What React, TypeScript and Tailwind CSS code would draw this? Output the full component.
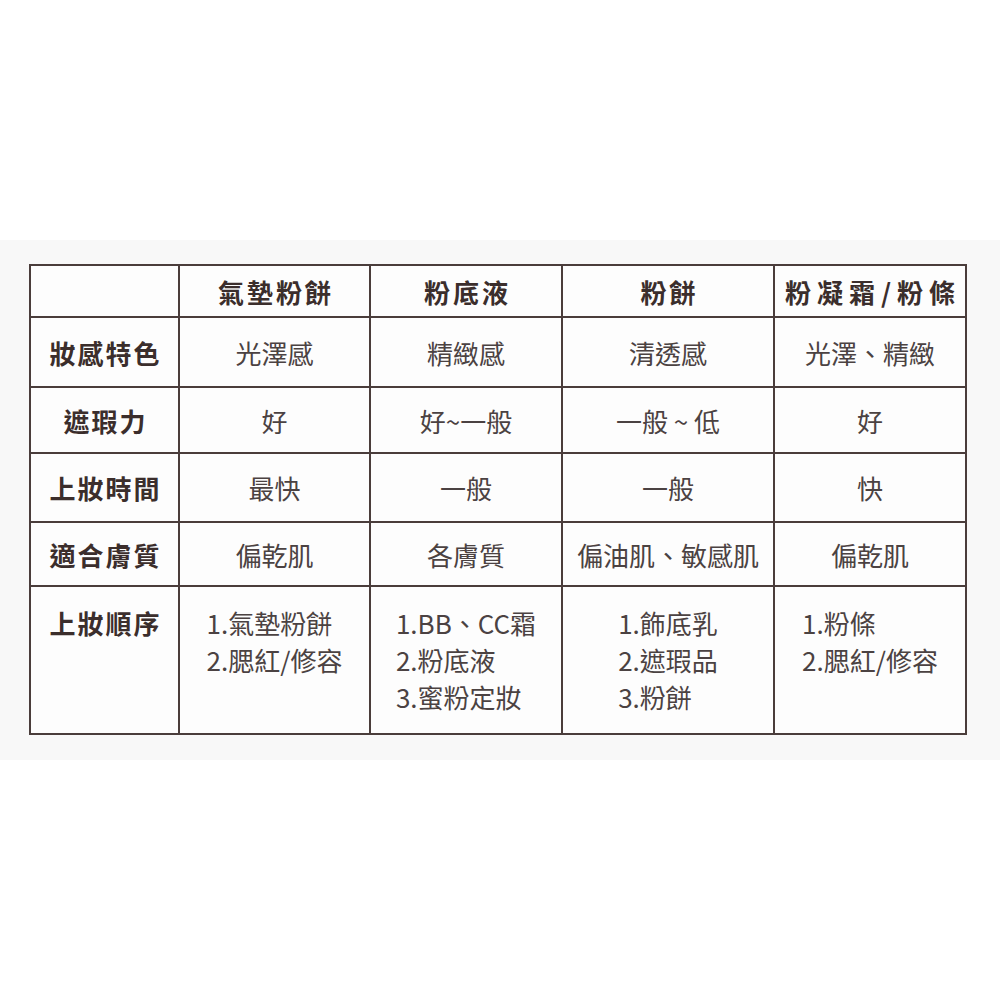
import React from 'react';

const font = { fontFamily: '"Noto Sans CJK TC", "Noto Sans", sans-serif' };

const heads = ['氣墊粉餅', '粉底液', '粉餅', '粉凝霜/粉條'];

const rows: { label: string; cells: string[] }[] = [
  { label: '妝感特色', cells: ['光澤感', '精緻感', '清透感', '光澤、精緻'] },
  { label: '遮瑕力', cells: ['好', '好~一般', '一般 ~ 低', '好'] },
  { label: '上妝時間', cells: ['最快', '一般', '一般', '快'] },
  { label: '適合膚質', cells: ['偏乾肌', '各膚質', '偏油肌、敏感肌', '偏乾肌'] },
];

const steps = [
  ['1.氣墊粉餅', '2.腮紅/修容'],
  ['1.BB、CC霜', '2.粉底液', '3.蜜粉定妝'],
  ['1.飾底乳', '2.遮瑕品', '3.粉餅'],
  ['1.粉條', '2.腮紅/修容'],
];

const cell = 'border-r-2 border-b-2 border-[#4a3d3b] flex items-center justify-center';

export default function App() {
  return (
    <div className="w-[1000px] h-[1000px] bg-white pt-[240px]" style={font}>
      <div className="h-[520px] bg-[#f8f8f8] pt-[24px] pl-[29px]">
        <div className="grid grid-cols-[149px_191px_192px_212px_192px] grid-rows-[52px_70px_66px_69px_64px_148px] w-max border-l-2 border-t-2 border-[#4a3d3b] bg-[#fdfdfd]">
          <div className={cell}></div>
          {heads.map((h, i) => (
            <div
              key={h}
              className={`${cell} text-[26px] font-bold text-[#3b2e2c] ${i === 3 ? 'tracking-[6px] pl-[6px]' : 'tracking-[3px] pl-[3px]'}`}
            >
              {h}
            </div>
          ))}
          {rows.map(r => (
            <React.Fragment key={r.label}>
              <div className={`${cell} text-[26px] font-bold text-[#3b2e2c] tracking-[2px] pl-[2px]`}>{r.label}</div>
              {r.cells.map((c, i) => (
                <div key={i} className={`${cell} text-[26px] text-[#4b4242]`}>
                  {c}
                </div>
              ))}
            </React.Fragment>
          ))}
          <div className="border-r-2 border-b-2 border-[#4a3d3b] flex justify-center pt-[17px] text-[26px] leading-[37px] font-bold text-[#3b2e2c] tracking-[2px] pl-[2px]">
            上妝順序
          </div>
          {steps.map((s, i) => (
            <div key={i} className="border-r-2 border-b-2 border-[#4a3d3b] flex justify-center pt-[17px]">
              <div className="text-[26px] leading-[37px] text-[#4b4242]">
                {s.map(line => (
                  <div key={line}>{line}</div>
                ))}
              </div>
            </div>
          ))}
        </div>
      </div>
    </div>
  );
}
